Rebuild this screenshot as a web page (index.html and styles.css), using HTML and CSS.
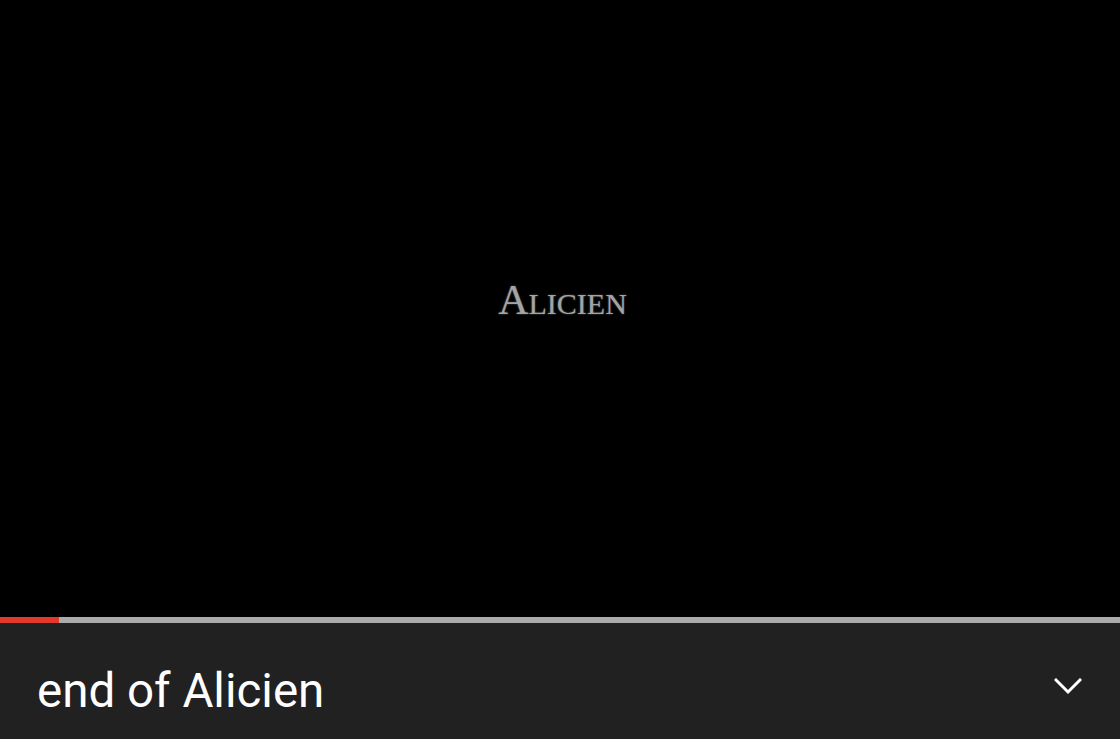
FILE: index.html
```html
<!DOCTYPE html>
<html>
<head>
<meta charset="utf-8">
<link rel="stylesheet" href="styles.css">
</head>
<body>
<div class="player">
  <div class="video">
    <div class="logo"><span class="big">A</span><span class="small">LICIEN</span></div>
  </div>
  <div class="progress"><div class="played" style="width:59px"></div></div>
</div>
<div class="titlebar">
  <div class="title">end of Alicien</div>
  <svg class="chevron" width="28" height="17" viewBox="0 0 28 17">
    <polyline points="2,2 14,14 26,2" fill="none" stroke="#fff" stroke-width="3" stroke-linecap="square"/>
  </svg>
</div>
</body>
</html>
```
FILE: styles.css
```css
html, body {
  margin: 0;
  padding: 0;
  background: #000;
  width: 1120px;
  height: 739px;
  overflow: hidden;
}
.player {
  display: flex;
  flex-direction: column;
}
.video {
  height: 617px;
  background: #000;
  display: flex;
  align-items: center;
  justify-content: center;
}
.logo {
  font-family: "Liberation Serif", serif;
  color: #a4a4a4;
  margin: 0 0 18px 5px;
  text-shadow: 0 0 2px rgba(160,160,160,0.6);
  line-height: 1;
}
.logo .big {
  font-size: 42px;
}
.logo .small {
  font-size: 30px;
}
.progress {
  height: 6px;
  background: #ababab;
  display: flex;
}
.played {
  background: #e3392d;
  height: 100%;
}
.titlebar {
  height: 116px;
  background: #212121;
  display: flex;
  align-items: flex-start;
  padding: 0 38px 0 37px;
}
.title {
  font-family: Roboto, sans-serif;
  font-size: 47.5px;
  line-height: 56px;
  color: #fff;
  padding-top: 40px;
}
.chevron {
  margin-left: auto;
  margin-top: 55px;
}
```
